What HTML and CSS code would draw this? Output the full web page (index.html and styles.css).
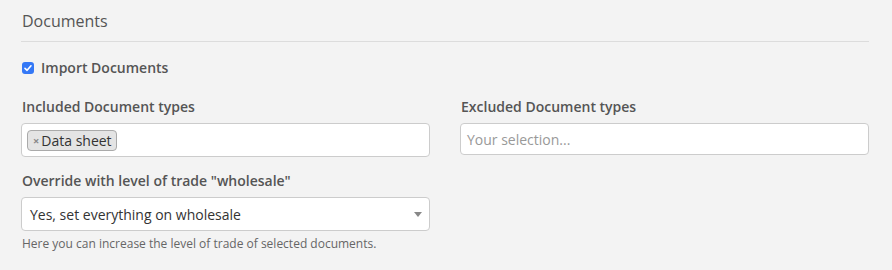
FILE: index.html
```html
<!DOCTYPE html>
<html lang="en">
<head>
  <meta charset="UTF-8">
  <title>Documents</title>
  <link rel="stylesheet" href="styles.css">
</head>
<body>
  <div class="section">
    <h2 class="section-title">Documents</h2>

    <label class="check-row">
      <span class="check-box">
        <svg viewBox="0 0 12 12" width="12" height="12"><path d="M3 6.3 L5.1 8.3 L9 3.8" fill="none" stroke="#fff" stroke-width="1.6" stroke-linecap="round" stroke-linejoin="round"/></svg>
      </span>
      Import Documents
    </label>

    <div class="form-grid">
      <div class="field">
        <label class="field-label">Included Document types</label>
        <div class="multi-select">
          <span class="tag"><span class="tag-remove">×</span>Data sheet</span>
        </div>
      </div>
      <div class="field">
        <label class="field-label">Excluded Document types</label>
        <div class="multi-select empty">
          <span class="placeholder">Your selection...</span>
        </div>
      </div>
      <div class="field">
        <label class="field-label">Override with level of trade "wholesale"</label>
        <div class="select">
          <span>Yes, set everything on wholesale</span>
          <span class="caret"></span>
        </div>
        <p class="help">Here you can increase the level of trade of selected documents.</p>
      </div>
    </div>
  </div>
</body>
</html>
```

FILE: styles.css
```css
body {
  margin: 0;
  background-color: #f3f3f3;
  font-family: 'Open Sans', 'Noto Sans', sans-serif;
  color: #555;
}

.section {
  padding: 8px 23px 0 21px;
}

.section-title {
  margin: 0;
  padding: 0 0 0 1px;
  font-size: 16px;
  font-weight: 400;
  line-height: 26px;
  height: 33px;
  border-bottom: 1px solid #dcdcdc;
  color: #555;
}

.check-row {
  display: flex;
  align-items: center;
  gap: 7px;
  margin: 17px 0 0 1px;
  font-size: 14px;
  font-weight: 600;
  line-height: 18px;
}

.check-box {
  width: 12px;
  height: 12px;
  border-radius: 3px;
  background-color: #3478f6;
  display: flex;
  align-items: center;
  justify-content: center;
}

.form-grid {
  display: grid;
  grid-template-columns: 1fr 1fr;
  column-gap: 30px;
  margin-top: 21px;
}

.field-label {
  display: block;
  margin: 0 0 7px 1px;
  font-size: 14px;
  font-weight: 600;
  line-height: 18px;
}

.multi-select {
  box-sizing: border-box;
  height: 34px;
  background-color: #fff;
  border: 1px solid #ccc;
  border-radius: 4px;
  padding: 5px 5px;
  display: flex;
  align-items: center;
}

.multi-select.empty {
  height: 32px;
  padding: 0 6px;
}

.placeholder {
  color: #999;
  font-size: 14px;
}

.tag {
  display: inline-flex;
  align-items: center;
  height: 21px;
  box-sizing: border-box;
  padding: 0 4px 0 5px;
  background-color: #e4e4e4;
  border: 1px solid #aaa;
  border-radius: 4px;
  color: #333;
  font-size: 14px;
}

.tag-remove {
  color: #888;
  font-weight: 700;
  font-size: 11px;
  margin-right: 2px;
}

.field:nth-child(3) {
  margin-top: 15px;
}

.select {
  box-sizing: border-box;
  height: 34px;
  background-color: #fff;
  border: 1px solid #ccc;
  border-radius: 4px;
  padding: 0 7px 0 8px;
  display: flex;
  align-items: center;
  justify-content: space-between;
  color: #333;
  font-size: 14px;
}

.caret {
  width: 0;
  height: 0;
  border-left: 4px solid transparent;
  border-right: 4px solid transparent;
  border-top: 5px solid #888;
}

.help {
  margin: 4px 0 0 1px;
  font-size: 12px;
  color: #666;
}
```
